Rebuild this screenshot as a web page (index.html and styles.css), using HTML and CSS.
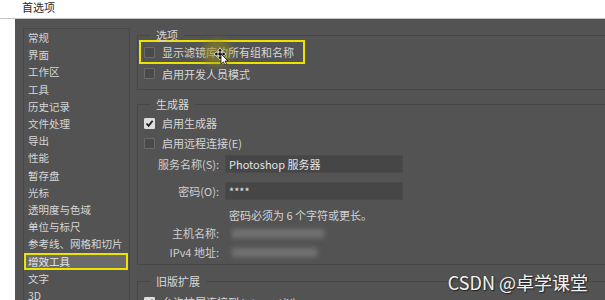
FILE: index.html
```html
<!DOCTYPE html>
<html lang="zh-CN">
<head>
    <meta charset="UTF-8">
    <meta name="viewport" content="width=device-width, initial-scale=1.0">
    <title>首选项</title>
    <link rel="stylesheet" href="styles.css">
</head>
<body>
    <div class="titlebar">首选项</div>

    <div class="dialog">
        <ul class="nav">
            <li>常规</li>
            <li>界面</li>
            <li>工作区</li>
            <li>工具</li>
            <li>历史记录</li>
            <li>文件处理</li>
            <li>导出</li>
            <li>性能</li>
            <li>暂存盘</li>
            <li>光标</li>
            <li>透明度与色域</li>
            <li>单位与标尺</li>
            <li>参考线、网格和切片</li>
            <li class="selected">增效工具</li>
            <li>文字</li>
            <li>3D</li>
        </ul>

        <div class="pane">
            <fieldset class="group group-options">
                <legend>选项</legend>
                <div class="check-row highlight"><span class="box"></span>显示滤镜库的所有组和名称</div>
                <div class="check-row"><span class="box"></span>启用开发人员模式</div>
            </fieldset>

            <fieldset class="group group-generator">
                <legend>生成器</legend>
                <div class="check-row tall"><span class="box checked"><svg width="9" height="9" viewBox="0 0 9 9"><polyline points="1.5,4.5 3.6,6.8 7.6,1.8" fill="none" stroke="#1e1e1e" stroke-width="1.8"/></svg></span>启用生成器</div>
                <div class="check-row tall"><span class="box"></span>启用远程连接(E)</div>
                <div class="form-row first">
                    <label>服务名称(S):</label>
                    <div class="input">Photoshop 服务器</div>
                </div>
                <div class="form-row second">
                    <label>密码(O):</label>
                    <div class="input">****</div>
                </div>
                <div class="hint">密码必须为 6 个字符或更长。</div>
                <div class="form-row info">
                    <label>主机名称:</label>
                    <div class="blurred wide"></div>
                </div>
                <div class="form-row info">
                    <label>IPv4 地址:</label>
                    <div class="blurred"></div>
                </div>
            </fieldset>

            <fieldset class="group group-legacy">
                <legend>旧版扩展</legend>
                <div class="check-row tall"><span class="box checked"><svg width="9" height="9" viewBox="0 0 9 9"><polyline points="1.5,4.5 3.6,6.8 7.6,1.8" fill="none" stroke="#1e1e1e" stroke-width="1.8"/></svg></span>允许扩展连接到 Internet(X)</div>
            </fieldset>
        </div>

        <div class="cursor-glow"></div>
        <svg class="cursor" width="16" height="18" viewBox="0 0 16 18">
            <path d="M6 1 L8.5 4 H7 V6 H9 V4.5 L12 7 L9 9.5 V8 H7 V10 H8.5 L6 13 L3.5 10 H5 V8 H3 V9.5 L0 7 L3 4.5 V6 H5 V4 H3.5 Z" fill="#111" stroke="#eee" stroke-width="0.8"/>
            <path d="M7 7 L7 17 L9.3 14.8 L11 18 L12.6 17.2 L11 14 L14 14 Z" fill="#fff" stroke="#111" stroke-width="0.8"/>
        </svg>

        <div class="watermark">CSDN @卓学课堂</div>
    </div>
</body>
</html>
```

FILE: styles.css
```css
* {
    box-sizing: border-box;
}
html, body {
    margin: 0;
    width: 605px;
    height: 300px;
    overflow: hidden;
    background: #fff;
    font-family: "Noto Sans CJK SC", "Noto Sans", sans-serif;
    font-size: 11px;
}
.titlebar {
    height: 19px;
    line-height: 15px;
    padding-left: 22px;
    color: #2a2a2a;
    background: #fff;
    border-bottom: 1px solid #c4c4c4;
}
.dialog {
    position: relative;
    display: flex;
    margin-left: 15px;
    height: 281px;
    padding: 9px 0 0 8px;
    background: #535353;
    color: #d6d6d6;
}
.nav {
    list-style: none;
    margin: 0;
    padding: 0;
    width: 107px;
    flex: none;
    border: 1px solid #484848;
    border-bottom: none;
    font-size: 10.5px;
}
.nav li {
    line-height: 17.2px;
    padding-left: 4px;
    white-space: nowrap;
}
.nav li.selected {
    line-height: 13.2px;
    margin-right: 1px;
    padding-left: 2px;
    border: 2px solid #ece300;
    background: #6b6b6b;
    color: #e8e8e8;
}
.pane {
    margin-left: 7px;
    width: 520px;
    flex: none;
}
.group {
    margin: 0;
    padding: 0 0 0 6px;
    border: 1px solid #474747;
    border-right: none;
    min-width: 0;
}
.group legend {
    margin-left: 6px;
    padding: 0 6px;
    line-height: 14px;
    color: #d8d8d8;
}
.group-options legend {
    margin-bottom: -2px;
}
.group-options {
    padding-bottom: 6px;
}
.group-generator {
    margin-top: 7px;
    padding-top: 2px;
    padding-bottom: 3px;
}
.group-legacy {
    margin-top: 9px;
    padding-top: 4px;
}
.check-row {
    display: flex;
    align-items: center;
    gap: 7px;
    height: 19px;
    white-space: nowrap;
}
.check-row.tall {
    height: 20px;
}
.check-row.highlight {
    width: 166px;
    height: 24px;
    margin-left: -5px;
    padding-left: 3px;
    border: 2px solid #ece300;
}
.box {
    display: flex;
    align-items: center;
    justify-content: center;
    width: 11px;
    height: 11px;
    flex: none;
    border: 1px solid #6a6a6a;
    background: #4a4a4a;
    border-radius: 1px;
}
.box.checked {
    background: #dedede;
    border-color: #dedede;
}
.form-row {
    display: flex;
    align-items: center;
    gap: 6px;
    height: 18px;
}
.form-row label {
    width: 75px;
    text-align: right;
    white-space: nowrap;
    color: #cfcfcf;
}
.form-row.first {
    margin-top: 2px;
}
.form-row.second {
    margin-top: 9px;
}
.form-row.info {
    margin-top: 1px;
    gap: 13px;
}
.input {
    width: 178px;
    height: 18px;
    line-height: 16px;
    padding-left: 3px;
    background: #464646;
    border: 1px solid #4b4b4b;
    color: #e2e2e2;
}
.hint {
    height: 16px;
    line-height: 16px;
    margin-top: 7px;
    padding-left: 85px;
    color: #d4d4d4;
}
.blurred {
    width: 85px;
    height: 9px;
    background: #727272;
    filter: blur(2.5px);
}
.blurred.wide {
    width: 92px;
}
.cursor-glow {
    position: absolute;
    left: 187px;
    top: 21px;
    width: 30px;
    height: 26px;
    border-radius: 50%;
    background: rgba(150, 140, 20, 0.55);
    filter: blur(3px);
}
.cursor {
    position: absolute;
    left: 199px;
    top: 28px;
}
.watermark {
    position: absolute;
    right: 17px;
    bottom: 8px;
    font-size: 18px;
    line-height: 20px;
    color: #f2f2f2;
    text-shadow: 0 0 2px #333, 1px 1px 1px #222;
}
```
